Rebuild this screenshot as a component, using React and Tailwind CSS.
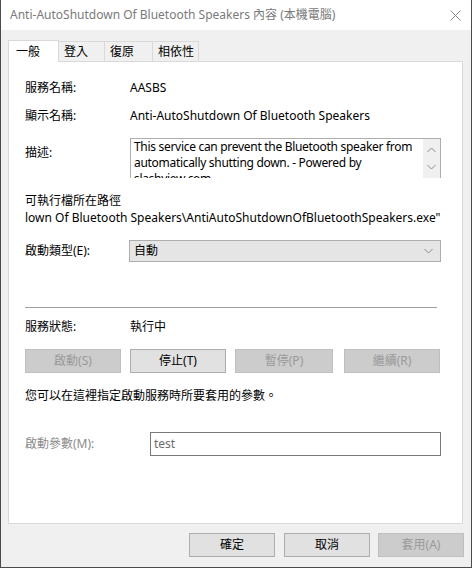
import React from 'react';

const font = { fontFamily: '"Noto Sans", "Noto Sans CJK TC", sans-serif' };

function Chevron({ up = false, className = '' }) {
  return (
    <svg width="9" height="6" viewBox="0 0 9 6" className={className}>
      <path
        d={up ? 'M0.5 5 L4.5 1 L8.5 5' : 'M0.5 1 L4.5 5 L8.5 1'}
        fill="none"
        stroke="#8a8a8a"
        strokeWidth="1"
      />
    </svg>
  );
}

function Btn({ children, disabled, className = '' }) {
  return (
    <div
      className={
        'flex items-center justify-center h-[24px] border text-[12px] ' +
        (disabled
          ? 'bg-[#cccccc] border-[#bfbfbf] text-[#9a9a9a] '
          : 'bg-[#e1e1e1] border-[#adadad] text-black ') +
        className
      }
    >
      {children}
    </div>
  );
}

export default function App() {
  const tabs = [
    { label: '登入', w: 'w-[46px]' },
    { label: '復原', w: 'w-[48px]' },
    { label: '相依性', w: 'w-[46px]' },
  ];

  return (
    <div
      className="w-[472px] h-[568px] flex flex-col bg-[#f0f0f0] border-x border-b border-[#4b4b4b] overflow-hidden text-[12px] text-black"
      style={font}
    >
      {/* title bar */}
      <div className="h-[30px] bg-white flex items-center justify-between pl-[9px] pr-[10px] shrink-0">
        <span className="text-[12px] text-[#7a7a7a]">Anti-AutoShutdown Of Bluetooth Speakers 內容 (本機電腦)</span>
        <svg width="11" height="11" viewBox="0 0 11 11">
          <path d="M0.5 0.5 L10.5 10.5 M10.5 0.5 L0.5 10.5" stroke="#8a8a8a" strokeWidth="1" />
        </svg>
      </div>

      <div className="flex-1 flex flex-col px-[7px]">
        {/* tabs */}
        <div className="flex items-end h-[31px] shrink-0">
          <div className="relative z-10 h-[22px] w-[51px] bg-white border-x border-t border-[#d9d9d9] flex items-start pl-[7px] pt-[2px] mb-[-1px]">
            一般
          </div>
          {tabs.map((t) => (
            <div
              key={t.label}
              className={'h-[20px] pl-[5px] bg-[#f0f0f0] border-t border-r border-[#d9d9d9] flex items-center ' + t.w}
            >
              {t.label}
            </div>
          ))}
        </div>

        {/* panel */}
        <div className="h-[463px] w-[455px] bg-white border border-[#d9d9d9] flex flex-col pl-[16px] pr-[21px] shrink-0">
          <div className="mt-[18px] h-[16px] flex items-center">
            <span className="w-[105px]">服務名稱:</span>
            <span>AASBS</span>
          </div>
          <div className="mt-[12px] h-[16px] flex items-center">
            <span className="w-[105px]">顯示名稱:</span>
            <span>Anti-AutoShutdown Of Bluetooth Speakers</span>
          </div>
          <div className="mt-[14px] h-[40px] flex items-start">
            <span className="w-[105px] pt-[6px]">描述:</span>
            <div className="flex-1 h-[40px] border-x border-t border-[#adadad] flex overflow-hidden">
              <div className="flex-1 pl-[3px] leading-[16px] whitespace-nowrap tracking-[-0.3px]">
                <div>This service can prevent the Bluetooth speaker from</div>
                <div>automatically shutting down. - Powered by</div>
                <div>slashview.com -</div>
              </div>
              <div className="w-[17px] bg-[#f0f0f0] flex flex-col items-center justify-between py-[8px]">
                <Chevron up />
                <Chevron />
              </div>
            </div>
          </div>
          <div className="mt-[15px] h-[16px] flex items-center">可執行檔所在路徑</div>
          <div className="mt-[1px] h-[16px] flex items-center whitespace-nowrap">
            lown Of Bluetooth Speakers\AntiAutoShutdownOfBluetoothSpeakers.exe"
          </div>
          <div className="mt-[14px] h-[22px] flex items-center">
            <span className="w-[104px]">啟動類型(E):</span>
            <div className="flex-1 h-[22px] bg-[#e5e5e5] border border-[#adadad] flex items-center justify-between pl-[4px] pr-[7px]">
              <span>自動</span>
              <Chevron />
            </div>
          </div>
          <div className="mt-[45px] h-px bg-[#a0a0a0] mr-[4px]" />
          <div className="mt-[11px] h-[16px] flex items-center">
            <span className="w-[105px]">服務狀態:</span>
            <span>執行中</span>
          </div>
          <div className="mt-[14px] flex">
            <Btn disabled className="w-[96px]">啟動(S)</Btn>
            <Btn className="w-[96px] ml-[9px]">停止(T)</Btn>
            <Btn disabled className="w-[98px] ml-[9px]">暫停(P)</Btn>
            <Btn disabled className="w-[96px] ml-[11px]">繼續(R)</Btn>
          </div>
          <div className="mt-[15px] h-[16px] flex items-center">您可以在這裡指定啟動服務時所要套用的參數。</div>
          <div className="mt-[28px] h-[24px] flex items-center">
            <span className="w-[125px] text-[#8a8a8a]">啟動參數(M):</span>
            <div className="flex-1 h-[24px] border border-[#7a7a7a] flex items-center pl-[3px] text-[#6d6d6d]">
              test
            </div>
          </div>
        </div>

        {/* bottom buttons */}
        <div className="flex justify-end mt-[9px] pr-0">
          <Btn className="w-[86px]">確定</Btn>
          <Btn className="w-[86px] ml-[9px]">取消</Btn>
          <Btn disabled className="w-[86px] ml-[8px]">套用(A)</Btn>
        </div>
      </div>
    </div>
  );
}
